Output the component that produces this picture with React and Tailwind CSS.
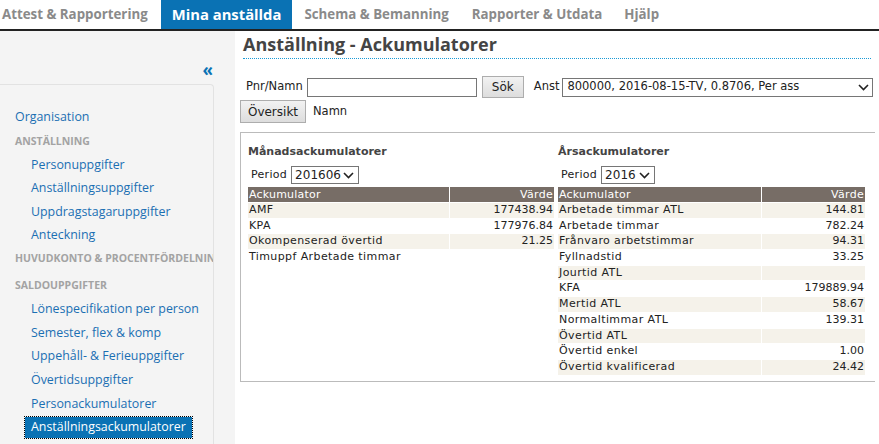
import React from "react";

const Chevron = ({ className = "" }) => (
  <svg width="11" height="7" viewBox="0 0 11 7" className={className}>
    <polyline points="1,1 5.5,5.5 10,1" fill="none" stroke="#222" strokeWidth="1.6" />
  </svg>
);

const monthRows = [
  ["AMF", "177438.94"],
  ["KPA", "177976.84"],
  ["Okompenserad övertid", "21.25"],
  ["Timuppf Arbetade timmar", ""],
];

const yearRows = [
  ["Arbetade timmar ATL", "144.81"],
  ["Arbetade timmar", "782.24"],
  ["Frånvaro arbetstimmar", "94.31"],
  ["Fyllnadstid", "33.25"],
  ["Jourtid ATL", ""],
  ["KFA", "179889.94"],
  ["Mertid ATL", "58.67"],
  ["Normaltimmar ATL", "139.31"],
  ["Övertid ATL", ""],
  ["Övertid enkel", "1.00"],
  ["Övertid kvalificerad", "24.42"],
];

function AccTable({ rows, firstCol }) {
  return (
    <div className="flex flex-col gap-px">
      <div className={`grid ${firstCol} gap-x-px h-[15px] leading-[15px] text-white`}>
        <div className="bg-[#776d66] pl-[1px] tracking-[0.2px]">Ackumulator</div>
        <div className="bg-[#776d66] text-right pr-[1px] tracking-[0.3px]">Värde</div>
      </div>
      {rows.map(([name, val], i) => (
        <div key={name} className={`grid ${firstCol} gap-x-px h-[14.7px] leading-[14.7px] text-[#222]`}>
          <div className={`${i % 2 === 0 ? "bg-[#f5f2ea]" : "bg-white"} pl-[1px] whitespace-nowrap tracking-[0.4px]`}>{name}</div>
          <div className={`${i % 2 === 0 ? "bg-[#f5f2ea]" : "bg-white"} text-right pr-[1px]`}>{val}</div>
        </div>
      ))}
    </div>
  );
}

function SideLink({ children, selected }) {
  return (
    <div className="h-[23.6px] flex items-center whitespace-nowrap">
      <span
        className={
          selected
            ? "ml-[25px] px-[6px] h-[21px] leading-[19px] bg-[#0a72b4] text-white outline outline-1 outline-dotted outline-black"
            : "ml-[25px] px-[6px] text-[#1b6fb3]"
        }
      >
        {children}
      </span>
    </div>
  );
}

function SideHead({ children, className = "" }) {
  return (
    <div className={`h-[23.6px] flex items-center pl-[15px] text-[10.5px] font-bold text-[#a3a3a3] whitespace-nowrap ${className}`}>
      {children}
    </div>
  );
}

export default function App() {
  const navFont = { fontFamily: '"Open Sans", "Noto Sans", sans-serif' };
  return (
    <div className="w-[879px] h-[444px] overflow-hidden bg-white flex flex-col">
      <nav
        className="h-[31px] border-b-2 border-[#222] flex items-stretch text-[13.3px] font-bold text-[#8a8a8a] shrink-0"
        style={navFont}
      >
        <div className="pl-[2px] pr-[13px] flex items-center">Attest &amp; Rapportering</div>
        <div className="px-[11px] flex items-center bg-[#0a72b4] text-white text-[14.8px]">Mina anställda</div>
        <div className="px-[12px] flex items-center">Schema &amp; Bemanning</div>
        <div className="px-[11px] flex items-center">Rapporter &amp; Utdata</div>
        <div className="px-[11px] flex items-center">Hjälp</div>
      </nav>

      <div className="flex flex-1 min-h-0">
        <aside className="w-[235px] bg-[#f4f4f4] flex flex-col shrink-0" style={navFont}>
          <div className="h-[53px] w-[214px] flex justify-end pt-[32px] pr-[1px]">
            <span className="text-[#0a72b4] font-bold text-[17px] leading-[14px]">«</span>
          </div>
          <div className="w-[214px] flex-1 border-t border-r border-[#e2e2e2] rounded-tr-[4px] pt-[21px] overflow-hidden text-[12.4px]">
            <div className="h-[23.6px] flex items-center pl-[15px] text-[#1b6fb3]">Organisation</div>
            <SideHead>ANSTÄLLNING</SideHead>
            <SideLink>Personuppgifter</SideLink>
            <SideLink>Anställningsuppgifter</SideLink>
            <SideLink>Uppdragstagaruppgifter</SideLink>
            <SideLink>Anteckning</SideLink>
            <SideHead>HUVUDKONTO &amp; PROCENTFÖRDELNING</SideHead>
            <SideHead className="mt-[3px]">SALDOUPPGIFTER</SideHead>
            <SideLink>Lönespecifikation per person</SideLink>
            <SideLink>Semester, flex &amp; komp</SideLink>
            <SideLink>Uppehåll- &amp; Ferieuppgifter</SideLink>
            <SideLink>Övertidsuppgifter</SideLink>
            <SideLink>Personackumulatorer</SideLink>
            <SideLink selected>Anställningsackumulatorer</SideLink>
          </div>
        </aside>

        <main className="flex-1 flex flex-col text-[11px] text-[#222]" style={{ fontFamily: '"DejaVu Sans", Verdana, sans-serif' }}>
          <div
            className="mx-[8px] pt-[1px] pb-[2px] leading-[24px] text-[18px] font-bold text-[#444] border-b border-dotted border-[#1a9ad6]"
            style={navFont}
          >
            Anställning - Ackumulatorer
          </div>

          <div className="mt-[17px] h-[22px] flex items-center pl-[11px]">
            <span className="text-[11.5px]">Pnr/Namn</span>
            <div className="ml-[4px] w-[170px] h-[19px] border border-[#767676] bg-white" />
            <button className="ml-[5px] w-[42px] h-[22px] border border-[#adadad] bg-gradient-to-b from-[#f2f2f2] to-[#dddddd] text-[12px] text-[#222]">
              Sök
            </button>
            <span className="ml-[10px] text-[11.5px]">Anst</span>
            <div className="ml-[3px] w-[311px] h-[19px] border border-[#767676] bg-white flex items-center justify-between pl-[4px] pr-[3px] text-[11.5px]">
              <span>800000, 2016-08-15-TV, 0.8706, Per ass</span>
              <Chevron />
            </div>
          </div>

          <div className="mt-[2px] h-[23px] flex items-center pl-[5px]">
            <button className="w-[66px] h-[23px] border border-[#adadad] bg-gradient-to-b from-[#f2f2f2] to-[#dddddd] text-[12px] text-[#222]">
              Översikt
            </button>
            <span className="ml-[7px] text-[11.5px]">Namn</span>
          </div>

          <div className="mt-[9px] ml-[5px] mr-[4px] border-t border-l border-b border-[#bbbbbb] pt-[11px] pb-[6px] pl-[7px] flex">
            <div className="w-[306px]">
              <div className="font-bold text-[#444] leading-[16px]">Månadsackumulatorer</div>
              <div className="mt-[6px] h-[18px] flex items-center pl-[3px]">
                <span className="tracking-[0.3px]">Period</span>
                <div className="ml-[4px] w-[68px] h-[18px] border border-[#767676] bg-white flex items-center justify-between pl-[3px] pr-[4px] text-[12px]">
                  <span>201606</span>
                  <Chevron />
                </div>
              </div>
              <div className="mt-[3px]">
                <AccTable rows={monthRows} firstCol="grid-cols-[201px_1fr]" />
              </div>
            </div>
            <div className="w-[307px] ml-[4px]">
              <div className="font-bold text-[#444] leading-[16px]">Årsackumulatorer</div>
              <div className="mt-[6px] h-[18px] flex items-center pl-[3px]">
                <span className="tracking-[0.3px]">Period</span>
                <div className="ml-[4px] w-[54px] h-[18px] border border-[#767676] bg-white flex items-center justify-between pl-[3px] pr-[4px] text-[12px]">
                  <span>2016</span>
                  <Chevron />
                </div>
              </div>
              <div className="mt-[3px]">
                <AccTable rows={yearRows} firstCol="grid-cols-[203px_1fr]" />
              </div>
            </div>
          </div>
        </main>
      </div>
    </div>
  );
}
